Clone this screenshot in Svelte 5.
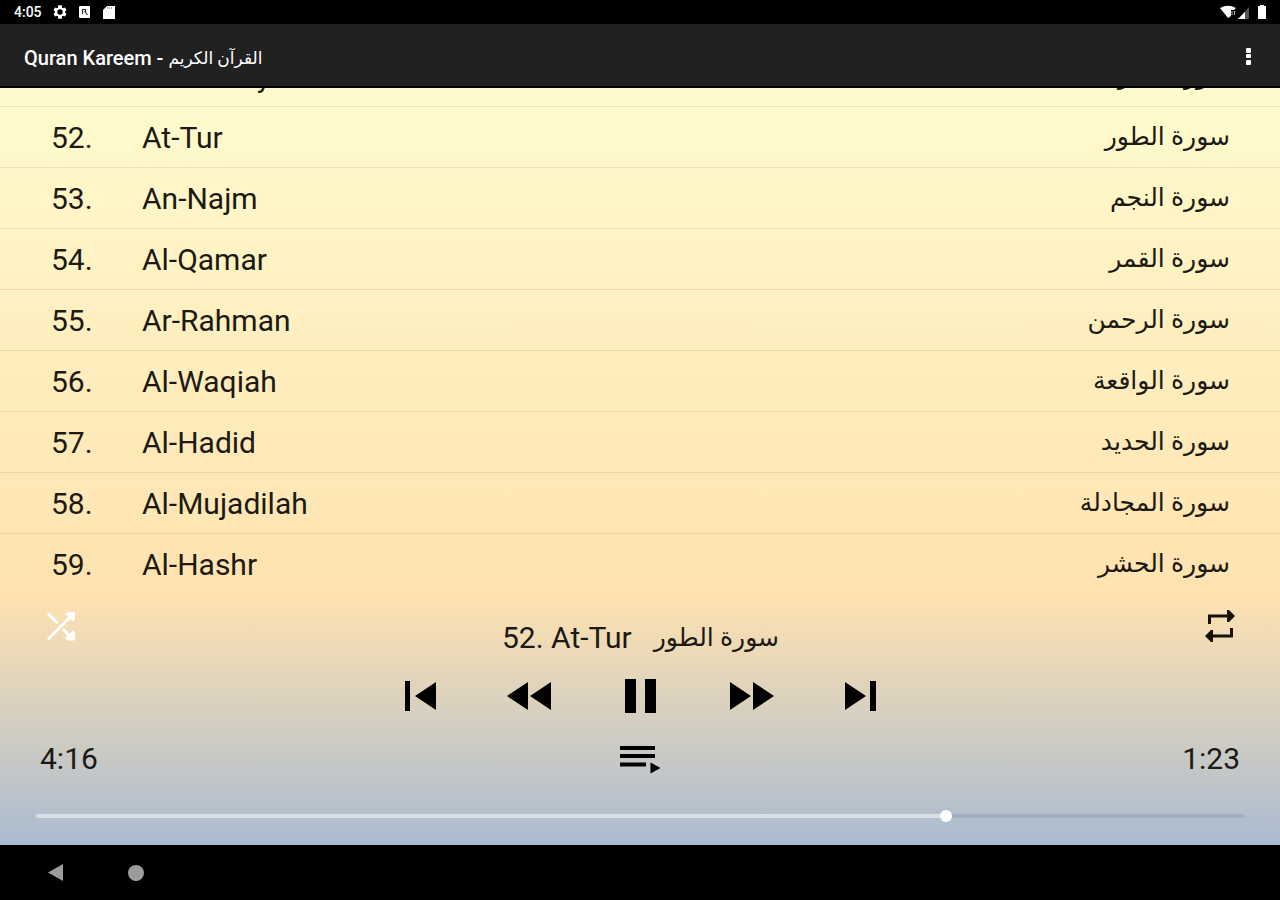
<script>
  const surahs = [
    { number: 51, name: 'Ad-Dhariyat', arabic: 'سورة الذاريات' },
    { number: 52, name: 'At-Tur', arabic: 'سورة الطور' },
    { number: 53, name: 'An-Najm', arabic: 'سورة النجم' },
    { number: 54, name: 'Al-Qamar', arabic: 'سورة القمر' },
    { number: 55, name: 'Ar-Rahman', arabic: 'سورة الرحمن' },
    { number: 56, name: 'Al-Waqiah', arabic: 'سورة الواقعة' },
    { number: 57, name: 'Al-Hadid', arabic: 'سورة الحديد' },
    { number: 58, name: 'Al-Mujadilah', arabic: 'سورة المجادلة' },
    { number: 59, name: 'Al-Hashr', arabic: 'سورة الحشر' }
  ];

  let current = $state(surahs[1]);
  let elapsed = $state(256);
  const duration = 339;

  const clock = (s) => `${Math.floor(s / 60)}:${String(s % 60).padStart(2, '0')}`;
</script>

<div class="screen">
  <div class="status">
    <span class="time">4:05</span>
    <svg width="16" height="16" viewBox="0 0 24 24" aria-hidden="true"><path fill="#fff" fill-rule="evenodd" d="M19.5 12.900v-1.800l2.300-1.800-2.300-4-2.800 1.100-1.600-.900L14.700 2H9.300L8.900 5.500l-1.600.900L4.500 5.300l-2.300 4 2.300 1.800v1.800l-2.300 1.800 2.300 4 2.800-1.100 1.600.900.400 3.500h5.400l.400-3.500 1.600-.900 2.800 1.100 2.300-4zM12 16a4 4 0 1 1 0-8 4 4 0 0 1 0 8z" /></svg>
    <svg width="14" height="16" viewBox="0 0 14 16" aria-hidden="true"><rect x="1" y="2" width="11" height="12" rx="1" fill="#fff" /><path d="M4.500 10V5.500h3V8M6.500 7l3 4" fill="none" stroke="#333" stroke-width="1.200" /></svg>
    <svg width="14" height="16" viewBox="0 0 14 16" aria-hidden="true"><path d="M5 2h8v13H1V6z" fill="#fff" /><path d="M5.500 3v2M7.500 3v2M9.500 3v2" stroke="#999" stroke-width=".8" /></svg>
    <svg class="signals" width="48" height="16" viewBox="0 0 48 16" aria-hidden="true">
      <path d="M2 4Q10 -.5 18 4l-2 2h-3v6l-3 2z" fill="#fff" />
      <path d="M14 7v4M16.500 7v4" stroke="#bbb" />
      <path d="M20 15 31 3v12z" fill="#555" />
      <path d="M20 15l7-7v7z" fill="#fff" />
      <path d="M40 2h2V1h4v1h2v13h-8z" fill="#fff" />
    </svg>
  </div>

  <header>
    <h1>Quran Kareem - <span class="ar" lang="ar" dir="rtl">القرآن الكريم</span></h1>
    <button class="more" aria-label="More options">
      <svg width="8" height="22" viewBox="0 0 8 22"><g fill="#fff"><rect x="2" y="4" width="5" height="5" rx="1" /><rect x="2" y="10" width="5" height="4" rx="1" /><rect x="2" y="16" width="5" height="5" rx="1" /></g></svg>
    </button>
  </header>

  <main>
    <ul>
      {#each surahs as surah (surah.number)}
        <li>
          <button class="row" onclick={() => (current = surah)}>
            <span class="number">{surah.number}.</span>
            <span class="name">{surah.name}</span>
            <span class="ar" lang="ar" dir="rtl">{surah.arabic}</span>
          </button>
        </li>
      {/each}
    </ul>

    <section class="player">
      <div class="now">
        <button aria-label="Shuffle">
          <svg width="30" height="32" viewBox="0 0 30 32"><g fill="none" stroke="#fff" stroke-width="3"><path d="M2 3.500l9.500 9.500M2 29.500 25 6M17 19l8 8.500" /></g><path d="M19 4l2.500-2H28l1 1v6l-2 2.500zM19 28l2.500 2.500H28l1-1V23l-2-2.500z" fill="#fff" /></svg>
        </button>
        <p>
          <span>{current.number}. {current.name}</span>
          <span class="ar" lang="ar" dir="rtl">{current.arabic}</span>
        </p>
        <button aria-label="Repeat">
          <svg width="30" height="32" viewBox="0 0 30 32"><path d="M4.500 14V6H23M26.500 18v8H8" fill="none" stroke="#161208" stroke-width="3" /><path d="M22 0h2l6 6-6 6h-2zM8 20H6l-6 6 6 6h2z" fill="#161208" /></svg>
        </button>
      </div>

      <div class="controls">
        <button aria-label="Previous"><svg width="46" height="36" viewBox="0 0 46 36"><path d="M10 3h5v30h-5zM41 4v28L20 18z" /></svg></button>
        <button aria-label="Rewind"><svg width="46" height="36" viewBox="0 0 46 36"><path d="M22 4v28L1 18zM45 4v28L24 18z" /></svg></button>
        <button aria-label="Pause"><svg width="46" height="36" viewBox="0 0 46 36"><path d="M8 1h11v34H8zM28 1h11v34H28z" /></svg></button>
        <button aria-label="Fast forward"><svg width="46" height="36" viewBox="0 0 46 36"><path d="M2 4v28l21-14zM25 4v28l21-14z" /></svg></button>
        <button aria-label="Next"><svg width="46" height="36" viewBox="0 0 46 36"><path d="M6 4v28l21-14zM31 3h6v30h-6z" /></svg></button>
      </div>

      <div class="times">
        <span>{clock(elapsed)}</span>
        <button aria-label="Playlist"><svg width="42" height="32" viewBox="0 0 42 32"><path d="M1 4h35v4H1zM1 12h35v4H1zM1 20.500h26v4H1zM31.500 20.500v11l10-5.500z" /></svg></button>
        <span>{clock(duration - elapsed)}</span>
      </div>

      <input
        type="range"
        aria-label="Position"
        min="0"
        max={duration}
        bind:value={elapsed}
        style="--played: {(elapsed / duration) * 100}%"
      />
    </section>
  </main>

  <nav>
    <button aria-label="Back"><svg width="18" height="20" viewBox="0 0 18 20"><path d="M17 1v17L2 9.500z" fill="#9c9c9c" /></svg></button>
    <button aria-label="Home"><svg width="18" height="20" viewBox="0 0 18 20"><circle cx="9" cy="10" r="8" fill="#9c9c9c" /></svg></button>
  </nav>
</div>

<style>
  :global(body) {
    margin: 0;
    background: #000;
  }
  .screen {
    display: flex;
    flex-direction: column;
    height: 100vh;
    overflow: hidden;
    font-family: Roboto, 'DejaVu Sans', sans-serif;
    color: #1c1a12;
  }
  button {
    display: flex;
    padding: 0;
    border: 0;
    background: none;
    color: inherit;
    font: inherit;
    text-align: left;
    cursor: pointer;
  }
  svg {
    display: block;
  }
  .status {
    display: flex;
    align-items: center;
    gap: 10px;
    height: 24px;
    padding: 0 14px;
    background: #000;
    color: #fff;
  }
  .time {
    font-size: 14px;
    font-weight: 500;
  }
  .signals {
    margin-left: auto;
  }
  header {
    display: flex;
    align-items: center;
    justify-content: space-between;
    height: 62px;
    padding: 0 28px 0 24px;
    border-bottom: 2px solid #000;
    background: #212121;
    color: #fff;
  }
  h1 {
    display: flex;
    align-items: center;
    gap: 5px;
    margin: 0;
    padding-top: 5px;
    font-size: 20px;
    font-weight: 500;
    line-height: 24px;
  }
  h1 .ar {
    font-size: 17px;
    line-height: 24px;
  }
  main {
    flex: 1;
    display: flex;
    flex-direction: column;
    min-height: 0;
    background: linear-gradient(#fffbce, #ffe2b0 67%, #aabbd1);
  }
  ul {
    flex: 1;
    display: flex;
    flex-direction: column;
    justify-content: flex-end;
    min-height: 0;
    margin: 0;
    padding: 0;
    overflow: hidden;
    list-style: none;
  }
  li {
    flex: none;
    border-bottom: 1px solid rgba(90, 60, 0, 0.1);
  }
  li:last-child {
    border-bottom-color: transparent;
  }
  .row {
    display: grid;
    grid-template-columns: 91px 1fr auto;
    align-items: center;
    width: 100%;
    height: 60px;
    padding: 0 50px 0 51px;
    font-size: 30px;
    line-height: 36px;
  }
  .row .number,
  .row .name {
    padding-top: 2px;
  }
  .ar {
    font-size: 25px;
    line-height: 32px;
  }
  .player {
    display: flex;
    flex-direction: column;
    height: 250px;
  }
  .now {
    display: flex;
    align-items: flex-start;
    justify-content: space-between;
    height: 78px;
    padding: 15px 45px 0 46px;
    box-sizing: border-box;
  }
  p {
    display: flex;
    align-items: center;
    gap: 22px;
    margin: 0;
    padding-top: 10px;
    font-size: 30px;
    line-height: 36px;
  }
  .controls {
    display: flex;
    justify-content: center;
    gap: 65px;
    height: 66px;
    padding-top: 5px;
    box-sizing: border-box;
  }
  .times {
    display: flex;
    align-items: center;
    justify-content: space-between;
    height: 38px;
    padding: 0 40px;
    font-size: 30px;
  }
  input {
    appearance: none;
    height: 12px;
    margin: 33px 35px 0 36px;
    background: transparent;
  }
  input::-webkit-slider-runnable-track {
    height: 4px;
    border-radius: 2px;
    background: linear-gradient(to right, #d7e0e6 var(--played), #a1b0bf var(--played));
  }
  input::-webkit-slider-thumb {
    appearance: none;
    width: 12px;
    height: 12px;
    margin-top: -4px;
    border-radius: 50%;
    background: #fff;
  }
  nav {
    display: flex;
    align-items: center;
    gap: 63px;
    height: 55px;
    padding: 0 46px;
    background: #000;
  }
</style>
